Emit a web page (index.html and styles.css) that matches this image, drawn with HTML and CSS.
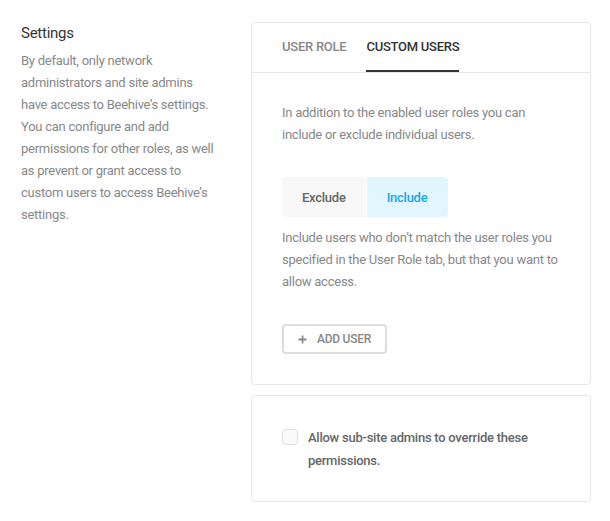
FILE: index.html
```html
<!DOCTYPE html>
<html>
<head>
<meta charset="utf-8">
<link rel="stylesheet" href="styles.css">
</head>
<body>
<div class="page">
  <div class="intro">
    <h2 class="title">Settings</h2>
    <p class="desc">By default, only network administrators and site admins have access to Beehive’s settings. You can configure and add permissions for other roles, as well as prevent or grant access to custom users to access Beehive’s settings.</p>
  </div>
  <div class="main">
    <div class="card">
      <div class="tabs">
        <div class="tab">User Role</div>
        <div class="tab active">Custom Users</div>
      </div>
      <div class="card-body">
        <p class="text">In addition to the enabled user roles you can include or exclude individual users.</p>
        <div class="segment">
          <div class="seg">Exclude</div>
          <div class="seg on">Include</div>
        </div>
        <p class="text note">Include users who don’t match the user roles you specified in the User Role tab, but that you want to allow access.</p>
        <button class="btn">
          <svg class="plus" width="9" height="9" viewBox="0 0 9 9"><path d="M4.5 0.5v8M0.5 4.5h8" stroke="#888" stroke-width="1.8" fill="none"/></svg>
          <span>Add User</span>
        </button>
      </div>
    </div>
    <div class="card card-body card-check">
      <label class="check">
        <span class="box"></span>
        <span class="check-label">Allow sub-site admins to override these permissions.</span>
      </label>
    </div>
  </div>
</div>
</body>
</html>
```
FILE: styles.css
```css
* { box-sizing: border-box; }
html, body { margin: 0; padding: 0; background: #fff; }
body {
  font-family: Roboto, "Liberation Sans", sans-serif;
  letter-spacing: -0.25px;
  -webkit-font-smoothing: antialiased;
}
.page {
  display: flex;
  padding: 22px 19px 0 21px;
}
.intro { width: 200px; flex: none; }
.title {
  margin: 0 0 6px;
  font-size: 15px;
  line-height: 22px;
  font-weight: 400;
  color: #333;
}
.desc {
  margin: 0;
  font-size: 13px;
  line-height: 22px;
  color: #888;
}
.main {
  margin-left: 30px;
  flex: 1;
  display: flex;
  flex-direction: column;
  gap: 10px;
}
.card {
  border: 1px solid #e6e6e6;
  border-radius: 4px;
  background: #fff;
}
.tabs {
  display: flex;
  gap: 20px;
  padding: 0 30px;
  border-bottom: 1px solid #e6e6e6;
}
.tab {
  padding: 14px 0 13px;
  font-size: 13px;
  line-height: 20px;
  font-weight: 500;
  text-transform: uppercase;
  color: #888;
  border-bottom: 2px solid transparent;
}
.tab.active { color: #333; border-bottom-color: #333; }
.card-body { padding: 29px 30px 30px; }
.card-check { padding-top: 30px; padding-bottom: 29px; }
.text {
  margin: 0;
  font-size: 13px;
  line-height: 22px;
  color: #888;
}
.segment {
  display: inline-flex;
  gap: 1px;
  margin-top: 31px;
  height: 40px;
}
.seg {
  display: flex;
  align-items: center;
  padding: 0 20px;
  font-size: 13px;
  font-weight: 500;
  color: #666;
  background: #f8f8f8;
}
.seg:first-child { border-radius: 4px 0 0 4px; }
.seg:last-child { border-radius: 0 4px 4px 0; }
.seg.on { background: #e1f6ff; color: #17a8e3; padding-right: 21px; }
.note { margin-top: 10px; }
.btn {
  display: flex;
  align-items: center;
  gap: 10px;
  margin-top: 31px;
  height: 30px;
  padding: 0 14px 0 14px;
  border: 2px solid #ddd;
  border-radius: 4px;
  background: #fff;
  font-family: inherit;
  letter-spacing: -0.25px;
  font-size: 12px;
  font-weight: 500;
  text-transform: uppercase;
  color: #888;
}
.plus { display: block; }
.check {
  display: flex;
  align-items: flex-start;
  gap: 10px;
}
.box {
  flex: none;
  width: 16px;
  height: 16px;
  margin-top: 3px;
  border: 1px solid #ddd;
  border-radius: 4px;
  background: #fafafa;
}
.check-label {
  font-size: 13px;
  line-height: 23px;
  font-weight: 500;
  color: #666;
}
```
